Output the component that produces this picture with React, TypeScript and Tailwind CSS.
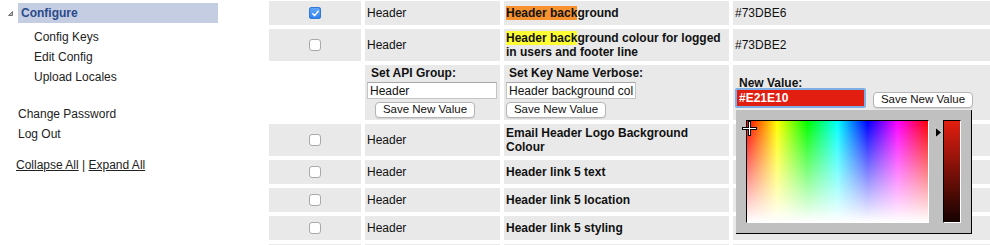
import type { ReactNode } from "react";

const font = "font-['Liberation_Sans','Helvetica_Neue',Arial,sans-serif]";

function Cell({ children, className = "" }: { children?: ReactNode; className?: string }) {
  return <div className={`bg-[#e9e9e9] ${className}`}>{children}</div>;
}

function Checkbox({ checked = false }: { checked?: boolean }) {
  if (checked) {
    return (
      <span className="flex h-[12px] w-[12px] items-center justify-center rounded-[3px] bg-[linear-gradient(to_bottom,#69acf8,#2a7ff1)] shadow-[inset_0_0_0_1px_#2f78d8]">
        <svg width="9" height="9" viewBox="0 0 9 9">
          <path d="M1.8 4.8 L3.7 6.6 L7.2 2.2" fill="none" stroke="#fff" strokeWidth="1.5" strokeLinecap="round" strokeLinejoin="round" />
        </svg>
      </span>
    );
  }
  return <span className="block h-[12px] w-[12px] rounded-[3px] border border-[#a9a9a9] bg-white" />;
}

function SaveButton({ className = "" }: { className?: string }) {
  return (
    <button
      type="button"
      className={`flex h-[16px] w-[100px] items-center justify-center rounded-[4px] border border-[#b4b4b4] bg-white text-[11.5px] leading-none text-[#111] shadow-[0_1px_0_rgba(0,0,0,0.08)] ${className}`}
    >
      Save New Value
    </button>
  );
}

function DataRow({ name, check }: { name: ReactNode; check?: boolean }) {
  return (
    <>
      <Cell className="flex items-center justify-center">
        <Checkbox checked={check} />
      </Cell>
      <Cell className="flex items-center px-[2px]">Header</Cell>
      <Cell className="flex items-center px-[2px] font-bold">
        <div>{name}</div>
      </Cell>
    </>
  );
}

function ColorPicker() {
  return (
    <div className="absolute left-[3px] top-[45px] z-10 flex h-[124px] w-[236px] border-b border-r border-black bg-[#c0c0c0] pl-[10px] pt-[10px]">
      <div className="relative h-[103px] w-[183px] border border-black border-b-white border-r-white bg-[linear-gradient(to_bottom,rgba(255,255,255,0),#fff),linear-gradient(to_right,#f00,#ff0,#0f0,#0ff,#00f,#f0f,#f00)]">
        <svg className="absolute left-[-5px] top-[0px]" width="15" height="15" viewBox="0 0 15 15">
          <path d="M7.5 0 V15 M0 7.5 H15" stroke="#000" strokeWidth="3" />
          <path d="M7.5 1 V14 M1 7.5 H14" stroke="#fff" strokeWidth="1" />
        </svg>
      </div>
      <div className="ml-[6px] mt-[7px]">
        <svg width="7" height="11" viewBox="0 0 7 11">
          <path d="M0.5 0.5 L6.5 5.5 L0.5 10.5 Z" fill="#000" stroke="#fff" strokeWidth="0.6" />
        </svg>
      </div>
      <div className="ml-[1px] h-[103px] w-[18px] border border-black border-b-white border-r-white bg-[linear-gradient(to_bottom,#e21e10,#140200)]" />
    </div>
  );
}

function Sidebar() {
  return (
    <div className="w-[269px] shrink-0 pt-[3px] text-[12px] text-[#222]">
      <div className="flex items-center">
        <svg className="ml-[8px] mr-[5px]" width="5" height="5" viewBox="0 0 5 5">
          <path d="M4.5 0.5 V4.5 H0.5 Z" fill="#bbb" stroke="#555" strokeWidth="0.8" />
        </svg>
        <div className="flex h-[20px] w-[200px] items-center bg-[#c5cde2] pl-[3px] font-bold text-[#2b4a8b]">
          Configure
        </div>
      </div>
      <div className="mt-[4px] pl-[34px] leading-[20px]">
        <div>Config Keys</div>
        <div>Edit Config</div>
        <div>Upload Locales</div>
      </div>
      <div className="mt-[17px] pl-[18px] leading-[20px]">
        <div>Change Password</div>
        <div>Log Out</div>
      </div>
      <div className="mt-[11px] pl-[16px] leading-[20px] text-[#222]">
        <a className="text-[#222] underline">Collapse All</a> | <a className="text-[#222] underline">Expand All</a>
      </div>
    </div>
  );
}

export default function App() {
  return (
    <div className={`flex h-[245px] w-[990px] overflow-hidden bg-white ${font} text-[12px] leading-[14px] text-[#111]`}>
      <Sidebar />
      <div className="mt-[1px] grid flex-1 grid-cols-[92px_135px_225px_1fr] grid-rows-[24px_32px_55px_32px_24px_24px_24px_24px] gap-[4px]">
        <DataRow
          check
          name={
            <>
              <span className="bg-[#f7922f]">Header back</span>ground
            </>
          }
        />
        <Cell className="flex items-center px-[2px]">#73DBE6</Cell>

        <DataRow
          name={
            <>
              <span className="bg-[#ffff33]">Header back</span>ground colour for logged in users and footer line
            </>
          }
        />
        <Cell className="flex items-center px-[2px]">#73DBE2</Cell>

        <div />
        <Cell className="flex flex-col px-[2px] pt-[1px]">
          <div className="pl-[4px] font-bold">Set API Group:</div>
          <input
            readOnly
            defaultValue="Header"
            className="mt-[2px] h-[17px] w-[130px] border border-[#c4c4c4] border-t-[#a8a8a8] bg-white px-[2px] text-[12px] outline-none"
          />
          <SaveButton className="ml-[8px] mt-[3px] w-[99px]" />
        </Cell>
        <Cell className="flex flex-col px-[2px] pt-[1px]">
          <div className="pl-[3px] font-bold">Set Key Name Verbose:</div>
          <input
            readOnly
            defaultValue="Header background colour for logged in users and footer line"
            className="mt-[2px] h-[17px] w-[130px] border border-[#c4c4c4] border-t-[#a8a8a8] bg-white px-[2px] text-[12px] outline-none"
          />
          <SaveButton className="mt-[3px]" />
        </Cell>
        <Cell className="relative flex flex-col px-[2px] pt-[12px]">
          <div className="pl-[4px] font-bold leading-[12px]">New Value:</div>
          <div className="-mt-[1px] flex items-end">
            <input
              readOnly
              defaultValue="#E21E10"
              className="h-[20px] w-[131px] rounded-[2px] border-2 border-[#7eaee6] bg-[#e21e10] px-[2px] text-[12px] font-bold text-white outline-none"
            />
            <SaveButton className="ml-[7px]" />
          </div>
          <ColorPicker />
        </Cell>

        <DataRow name="Email Header Logo Background Colour" />
        <Cell />
        <DataRow name="Header link 5 text" />
        <Cell />
        <DataRow name="Header link 5 location" />
        <Cell />
        <DataRow name="Header link 5 styling" />
        <Cell />
        <Cell />
        <Cell />
        <Cell />
        <Cell />
      </div>
    </div>
  );
}
